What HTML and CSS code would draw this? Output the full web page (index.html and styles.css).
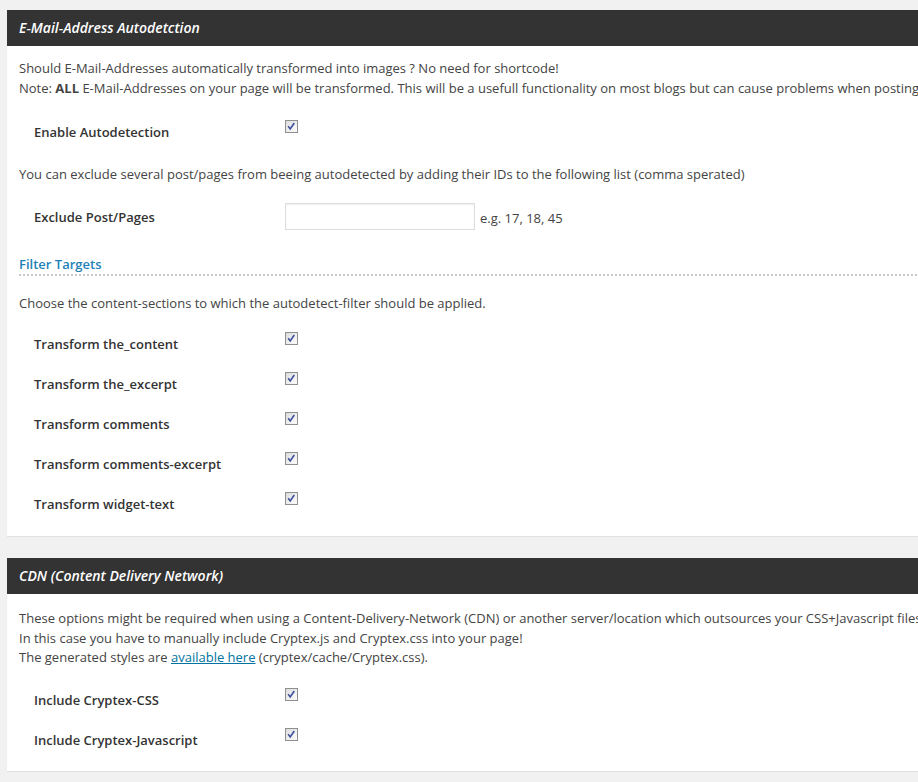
FILE: index.html
```html
<!DOCTYPE html>
<html>
<head>
<meta charset="utf-8">
<link rel="stylesheet" href="styles.css">
</head>
<body>
<div class="panel">
  <h2 class="panel-title">E-Mail-Address Autodetction</h2>
  <div class="inside">
    <p class="text intro">Should E-Mail-Addresses automatically transformed into images ? No need for shortcode!<br>Note: <strong>ALL</strong> E-Mail-Addresses on your page will be transformed. This will be a usefull functionality on most blogs but can cause problems when posting</p>
    <div class="row first-row">
      <div class="label">Enable Autodetection</div>
      <div class="field"><span class="cb"><svg viewBox="0 0 13 13" width="11" height="11"><path d="M2.6 6.2 L5 9.4 L9.8 2.4" fill="none" stroke="#3d4f9c" stroke-width="1.9"/></svg></span></div>
    </div>
    <p class="text after-row">You can exclude several post/pages from beeing autodetected by adding their IDs to the following list (comma sperated)</p>
    <div class="row exclude-row">
      <div class="label">Exclude Post/Pages</div>
      <div class="field"><span class="input"></span><span class="hint">e.g. 17, 18, 45</span></div>
    </div>
    <h3 class="section-title">Filter Targets</h3>
    <p class="text after-title">Choose the content-sections to which the autodetect-filter should be applied.</p>
    <div class="rows">
      <div class="row">
        <div class="label">Transform the_content</div>
        <div class="field"><span class="cb"><svg viewBox="0 0 13 13" width="11" height="11"><path d="M2.6 6.2 L5 9.4 L9.8 2.4" fill="none" stroke="#3d4f9c" stroke-width="1.9"/></svg></span></div>
      </div>
      <div class="row">
        <div class="label">Transform the_excerpt</div>
        <div class="field"><span class="cb"><svg viewBox="0 0 13 13" width="11" height="11"><path d="M2.6 6.2 L5 9.4 L9.8 2.4" fill="none" stroke="#3d4f9c" stroke-width="1.9"/></svg></span></div>
      </div>
      <div class="row">
        <div class="label">Transform comments</div>
        <div class="field"><span class="cb"><svg viewBox="0 0 13 13" width="11" height="11"><path d="M2.6 6.2 L5 9.4 L9.8 2.4" fill="none" stroke="#3d4f9c" stroke-width="1.9"/></svg></span></div>
      </div>
      <div class="row">
        <div class="label">Transform comments-excerpt</div>
        <div class="field"><span class="cb"><svg viewBox="0 0 13 13" width="11" height="11"><path d="M2.6 6.2 L5 9.4 L9.8 2.4" fill="none" stroke="#3d4f9c" stroke-width="1.9"/></svg></span></div>
      </div>
      <div class="row">
        <div class="label">Transform widget-text</div>
        <div class="field"><span class="cb"><svg viewBox="0 0 13 13" width="11" height="11"><path d="M2.6 6.2 L5 9.4 L9.8 2.4" fill="none" stroke="#3d4f9c" stroke-width="1.9"/></svg></span></div>
      </div>
    </div>
  </div>
</div>

<div class="panel panel-second">
  <h2 class="panel-title">CDN (Content Delivery Network)</h2>
  <div class="inside inside-second">
    <p class="text intro2">These options might be required when using a Content-Delivery-Network (CDN) or another server/location which outsources your CSS+Javascript files.<br>In this case you have to manually include Cryptex.js and Cryptex.css into your page!<br>The generated styles are <a class="link" href="#">available here</a> (cryptex/cache/Cryptex.css).</p>
    <div class="rows rows-second">
      <div class="row">
        <div class="label">Include Cryptex-CSS</div>
        <div class="field"><span class="cb"><svg viewBox="0 0 13 13" width="11" height="11"><path d="M2.6 6.2 L5 9.4 L9.8 2.4" fill="none" stroke="#3d4f9c" stroke-width="1.9"/></svg></span></div>
      </div>
      <div class="row">
        <div class="label">Include Cryptex-Javascript</div>
        <div class="field"><span class="cb"><svg viewBox="0 0 13 13" width="11" height="11"><path d="M2.6 6.2 L5 9.4 L9.8 2.4" fill="none" stroke="#3d4f9c" stroke-width="1.9"/></svg></span></div>
      </div>
    </div>
  </div>
</div>
</body>
</html>
```

FILE: styles.css
```css
html, body {
  margin: 0;
  padding: 0;
  overflow: hidden;
  background: #f1f1f1;
}
body {
  padding: 10px 0 20px 7px;
  font-family: "Open Sans", "Noto Sans", sans-serif;
  font-size: 13px;
  color: #444;
}
.panel {
  width: 1100px;
  background: #fff;
  box-shadow: 0 1px 1px rgba(0,0,0,0.06);
}
.panel-second {
  margin-top: 22px;
}
.panel-title {
  margin: 0;
  height: 36px;
  line-height: 36px;
  padding: 0 12px;
  background: #333;
  color: #fff;
  font-size: 14px;
  font-style: italic;
  font-weight: 600;
}
.inside {
  padding: 0 12px 12px;
}
.inside-second {
  padding-bottom: 11px;
}
.text {
  margin: 0;
  line-height: 19.5px;
  white-space: nowrap;
}
.text strong {
  font-weight: 700;
}
.intro {
  padding-top: 13px;
}
.intro2 {
  padding-top: 15px;
}
.first-row {
  margin-top: 14px;
}
.after-row {
  margin-top: 13px;
}
.exclude-row {
  margin-top: 12.5px;
}
.after-title {
  margin-top: 18px;
}
.rows {
  margin-top: 10.5px;
}
.rows-second {
  margin-top: 12.5px;
}
.row {
  display: grid;
  grid-template-columns: 251px 1fr;
  height: 40px;
  padding-left: 15px;
}
.label {
  padding-top: 10px;
  line-height: 20px;
  font-weight: 600;
  color: #333;
}
.field {
  display: flex;
  align-items: flex-start;
}
.cb {
  margin-top: 8px;
  width: 11px;
  height: 11px;
  border: 1px solid #8e8f8f;
  background: linear-gradient(135deg, #dcdcdc 0%, #f3f3f3 70%, #fbfbfb 100%);
  display: flex;
}
.cb svg {
  display: block;
}
.input {
  margin-top: 6px;
  width: 188px;
  height: 25px;
  border: 1px solid #ddd;
  box-shadow: inset 0 1px 2px rgba(0,0,0,0.07);
  background: #fff;
}
.hint {
  margin-top: 11px;
  margin-left: 5px;
  line-height: 20px;
  color: #444;
}
.section-title {
  margin: 18px 0 0;
  font-size: 13px;
  font-weight: 600;
  line-height: 19px;
  color: #1e81b8;
  padding-bottom: 0;
  background-image: linear-gradient(to right, #c8c8c8 50%, transparent 50%);
  background-size: 4px 2px;
  background-repeat: repeat-x;
  background-position: 0 100%;
  height: 21px;
}
.link {
  color: #0074a2;
  text-decoration: underline;
}
```
